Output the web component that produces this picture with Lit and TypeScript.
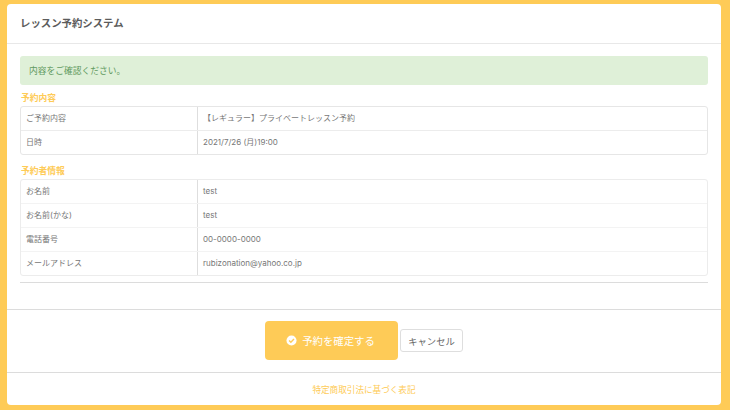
import { LitElement, html, css } from "lit";
import { customElement } from "lit/decorators.js";

const rows1 = [
  ["ご予約内容", "【レギュラー】プライベートレッスン予約"],
  ["日時", "2021/7/26 (月)19:00"],
];
const rows2 = [
  ["お名前", "test"],
  ["お名前(かな)", "test"],
  ["電話番号", "00-0000-0000"],
  ["メールアドレス", "rubizonation@yahoo.co.jp"],
];

@customElement("app-root")
export class AppRoot extends LitElement {
  static styles = css`
    :host {
      display: block;
      width: 730px;
      height: 410px;
      box-sizing: border-box;
      padding: 4px 9px 5px 7px;
      background: #fecb57;
      font-family: "Inter", "Noto Sans CJK JP", sans-serif;
      color: #777;
      overflow: hidden;
    }
    .card {
      height: 401px;
      background: #fff;
      border-radius: 4px;
      display: flex;
      flex-direction: column;
    }
    .head {
      height: 40px;
      flex: none;
      box-sizing: border-box;
      padding: 0 0 3px 13px;
      border-bottom: 1px solid #e8e8e8;
      display: flex;
      align-items: center;
      font-size: 10.4px;
      font-weight: 700;
      color: #5c5c5c;
    }
    .body {
      height: 266px;
      flex: none;
      box-sizing: border-box;
      padding: 12px 13px 0;
      border-bottom: 1px solid #dcdcdc;
    }
    .alert {
      height: 29px;
      box-sizing: border-box;
      background: #dff0d8;
      border-radius: 3px;
      color: #5f9a60;
      font-size: 8.75px;
      padding-left: 9px;
      display: flex;
      align-items: center;
    }
    .label {
      color: #fecb57;
      font-size: 8.75px;
      font-weight: 700;
      line-height: 13px;
      height: 13px;
      margin-left: 1px;
    }
    .l1 { margin-top: 7px; margin-bottom: 1px; }
    .l2 { margin-top: 10px; margin-bottom: 1px; }
    .table {
      border: 1px solid #e6e6e6;
      border-radius: 3px;
      font-size: 8px;
      color: #777;
    }
    .row {
      display: grid;
      grid-template-columns: 177px 1fr;
      height: 23px;
      align-items: stretch;
    }
    .row + .row { border-top: 1px solid #ececec; }
    .row > div { display: flex; align-items: center; padding-bottom: 2px; box-sizing: border-box; }
    .k { padding-left: 5px; border-right: 1px solid #dedede; }
    .v { padding-left: 5px; }
    .t2 .row + .row { border-top-color: #f3f3f3; }
    .t2 { border-color: #ececec; }
    .rule {
      margin-top: 6px;
      border-top: 1px solid #dcdcdc;
    }
    .actions {
      height: 63px;
      flex: none;
      box-sizing: border-box;
      border-bottom: 1px solid #dcdcdc;
      display: flex;
      justify-content: center;
      align-items: center;
      gap: 2px;
      padding-bottom: 1px;
    }
    .ok {
      width: 133px;
      height: 39px;
      background: #fecb57;
      border: 0;
      border-radius: 4px;
      color: #fff;
      font: inherit;
      font-size: 10.4px;
      display: flex;
      align-items: center;
      justify-content: center;
      gap: 5px;
      padding: 0 2px 0 0;
    }
    .ok svg { width: 11px; height: 11px; display: block; }
    .cancel {
      width: 63px;
      height: 23px;
      background: #fff;
      border: 1px solid #dedede;
      border-radius: 3px;
      color: #666;
      font: inherit;
      font-size: 9.3px;
      padding: 0;
    }
    .foot {
      flex: 1;
      display: flex;
      justify-content: center;
      align-items: center;
      color: #fecb57;
      font-size: 8.6px;
    }
  `;

  private table(rows: string[][], cls: string) {
    return html`<div class="table ${cls}">
      ${rows.map(
        ([k, v]) => html`<div class="row"><div class="k">${k}</div><div class="v">${v}</div></div>`
      )}
    </div>`;
  }

  render() {
    return html`<div class="card">
      <div class="head">レッスン予約システム</div>
      <div class="body">
        <div class="alert">内容をご確認ください。</div>
        <div class="label l1">予約内容</div>
        ${this.table(rows1, "t1")}
        <div class="label l2">予約者情報</div>
        ${this.table(rows2, "t2")}
        <div class="rule"></div>
      </div>
      <div class="actions">
        <button class="ok">
          <svg viewBox="0 0 12 12">
            <circle cx="6" cy="6" r="5.5" fill="#fff"></circle>
            <path d="M3.4 6.1 5.3 8 8.7 4.4" fill="none" stroke="#fecb57" stroke-width="1.5"></path>
          </svg>
          <span>予約を確定する</span>
        </button>
        <button class="cancel">キャンセル</button>
      </div>
      <div class="foot">特定商取引法に基づく表記</div>
    </div>`;
  }
}
